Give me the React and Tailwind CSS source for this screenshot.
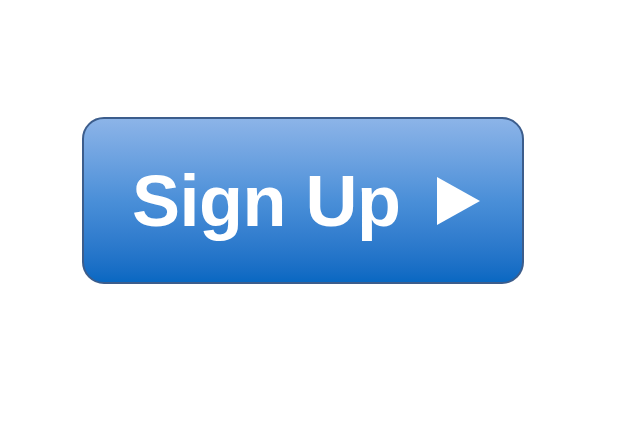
export default function App() {
  return (
    <div className="w-[640px] h-[425px] bg-white pt-[117px] pl-[82px]">
      <button
        className="flex items-center w-[442px] h-[167px] rounded-[22px] border-2 border-[#3c5d8c] bg-gradient-to-b from-[#8cb4e8] via-[#4a8fd8] to-[#0868c2] pl-[48px] text-white"
        style={{ fontFamily: '"Liberation Sans", Arial, sans-serif' }}
      >
        <span className="text-[72px] font-bold leading-none tracking-[-0.5px]">Sign Up</span>
        <svg className="ml-[37px]" width="43" height="48" viewBox="0 0 43 48">
          <polygon points="0,0 43,24 0,48" fill="#ffffff" />
        </svg>
      </button>
    </div>
  );
}
